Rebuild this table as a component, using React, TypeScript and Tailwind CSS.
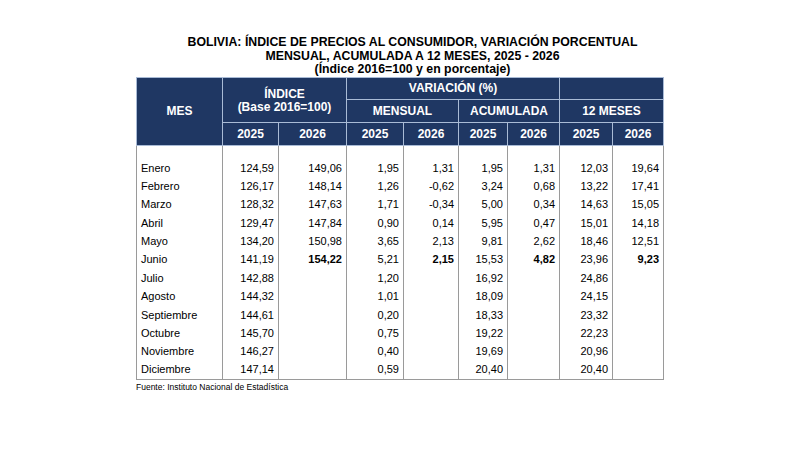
import React from "react";

type Row = {
  mes: string;
  vals: (string | null)[];
};

const rows: Row[] = [
  { mes: "Enero", vals: ["124,59", "149,06", "1,95", "1,31", "1,95", "1,31", "12,03", "19,64"] },
  { mes: "Febrero", vals: ["126,17", "148,14", "1,26", "-0,62", "3,24", "0,68", "13,22", "17,41"] },
  { mes: "Marzo", vals: ["128,32", "147,63", "1,71", "-0,34", "5,00", "0,34", "14,63", "15,05"] },
  { mes: "Abril", vals: ["129,47", "147,84", "0,90", "0,14", "5,95", "0,47", "15,01", "14,18"] },
  { mes: "Mayo", vals: ["134,20", "150,98", "3,65", "2,13", "9,81", "2,62", "18,46", "12,51"] },
  { mes: "Junio", vals: ["141,19", "154,22", "5,21", "2,15", "15,53", "4,82", "23,96", "9,23"] },
  { mes: "Julio", vals: ["142,88", null, "1,20", null, "16,92", null, "24,86", null] },
  { mes: "Agosto", vals: ["144,32", null, "1,01", null, "18,09", null, "24,15", null] },
  { mes: "Septiembre", vals: ["144,61", null, "0,20", null, "18,33", null, "23,32", null] },
  { mes: "Octubre", vals: ["145,70", null, "0,75", null, "19,22", null, "22,23", null] },
  { mes: "Noviembre", vals: ["146,27", null, "0,40", null, "19,69", null, "20,96", null] },
  { mes: "Diciembre", vals: ["147,14", null, "0,59", null, "20,40", null, "20,40", null] },
];

// last reported month: the 2026 figures are in bold
const boldRow = "Junio";

const head = "bg-[#1f3763] text-white font-bold border border-[#a9bbd6] text-center p-0 leading-none";
const cell = "border-x border-[#9a9a9a] text-right pr-[4px] p-0 h-[18.36px] leading-none";

export default function App() {
  return (
    <div className="w-[800px] h-[450px] bg-white text-black" style={{ fontFamily: '"Liberation Sans", Arial, sans-serif' }}>
      <div className="pt-[36px] pl-[136px]">
        <div className="w-[553px] text-center font-bold text-[12.3px] leading-[13.5px]">
          <div>BOLIVIA: ÍNDICE DE PRECIOS AL CONSUMIDOR, VARIACIÓN PORCENTUAL</div>
          <div>MENSUAL, ACUMULADA A 12 MESES, 2025 - 2026</div>
          <div>(Índice 2016=100 y en porcentaje)</div>
        </div>

        <table className="table-fixed border-collapse w-[527px] text-[11px]">
          <colgroup>
            <col className="w-[86px]" />
            <col className="w-[56px]" />
            <col className="w-[68px]" />
            <col className="w-[57px]" />
            <col className="w-[55px]" />
            <col className="w-[49px]" />
            <col className="w-[52px]" />
            <col className="w-[53px]" />
            <col className="w-[51px]" />
          </colgroup>
          <thead className="text-[12px]">
            <tr className="h-[22px]">
              <th rowSpan={3} className={head}>MES</th>
              <th rowSpan={2} colSpan={2} className={head}>
                <div className="leading-[13px] pt-[2px]">ÍNDICE</div>
                <div className="leading-[13px]">(Base 2016=100)</div>
              </th>
              <th colSpan={4} className={head}>VARIACIÓN (%)</th>
              <th colSpan={2} className={head}></th>
            </tr>
            <tr className="h-[23px]">
              <th colSpan={2} className={head}>MENSUAL</th>
              <th colSpan={2} className={head}>ACUMULADA</th>
              <th colSpan={2} className={head}>12 MESES</th>
            </tr>
            <tr className="h-[23px]">
              {["2025", "2026", "2025", "2026", "2025", "2026", "2025", "2026"].map((y, i) => (
                <th key={i} className={head}>{y}</th>
              ))}
            </tr>
          </thead>
          <tbody className="border-b border-[#9a9a9a]">
            <tr className="h-[14px]">
              {Array.from({ length: 9 }).map((_, i) => (
                <td key={i} className="border-x border-[#9a9a9a] p-0"></td>
              ))}
            </tr>
            {rows.map((r) => (
              <tr key={r.mes}>
                <td className="border-x border-[#9a9a9a] text-left pl-[4px] p-0 h-[18.36px] leading-none">{r.mes}</td>
                {r.vals.map((v, i) => (
                  <td key={i} className={`${cell} ${r.mes === boldRow && i % 2 === 1 ? "font-bold" : ""}`}>
                    {v ?? ""}
                  </td>
                ))}
              </tr>
            ))}
          </tbody>
        </table>

        <div className="text-[8.5px] leading-none pt-[3px]">Fuente: Instituto Nacional de Estadística</div>
      </div>
    </div>
  );
}
